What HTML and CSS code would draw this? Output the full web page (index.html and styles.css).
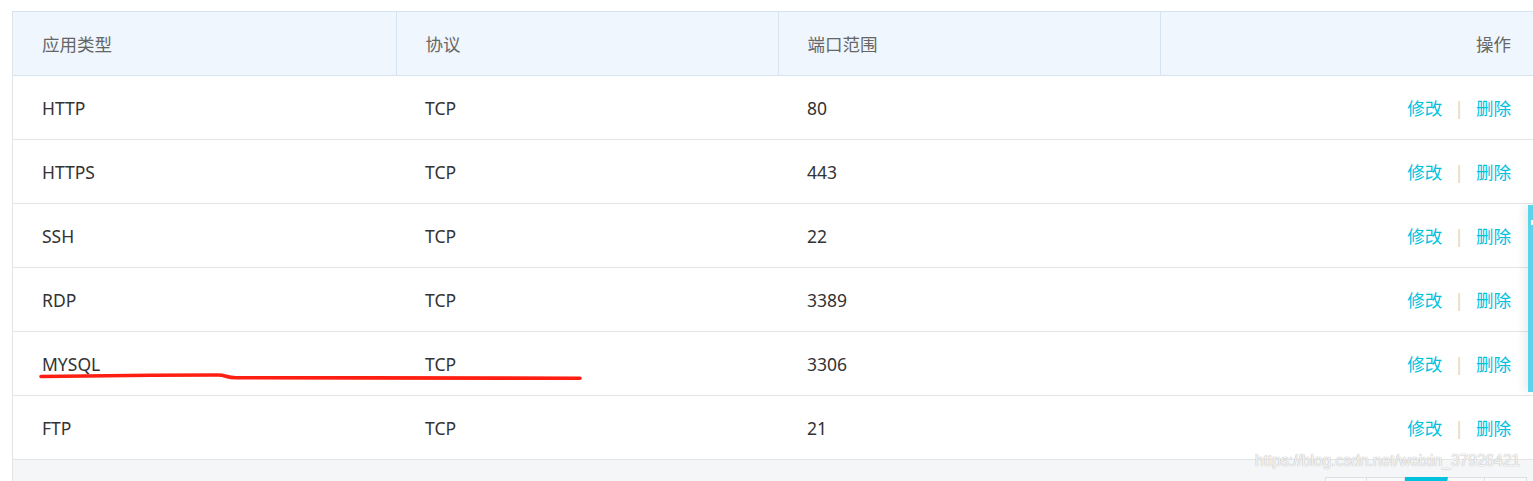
FILE: index.html
```html
<!DOCTYPE html>
<html lang="zh-CN">
<head>
<meta charset="utf-8">
<title>端口规则</title>
<link rel="stylesheet" href="styles.css">
</head>
<body>
<div class="page">
  <div class="panel">
    <table class="rules">
      <colgroup><col class="c1"><col class="c2"><col class="c3"><col class="c4"></colgroup>
      <thead>
        <tr><th>应用类型</th><th>协议</th><th>端口范围</th><th class="ops">操作</th></tr>
      </thead>
      <tbody>
        <tr><td>HTTP</td><td>TCP</td><td>80</td><td class="ops"><a>修改</a><span class="sep">|</span><a>删除</a></td></tr>
        <tr><td>HTTPS</td><td>TCP</td><td>443</td><td class="ops"><a>修改</a><span class="sep">|</span><a>删除</a></td></tr>
        <tr><td>SSH</td><td>TCP</td><td>22</td><td class="ops"><a>修改</a><span class="sep">|</span><a>删除</a></td></tr>
        <tr><td>RDP</td><td>TCP</td><td>3389</td><td class="ops"><a>修改</a><span class="sep">|</span><a>删除</a></td></tr>
        <tr><td>MYSQL</td><td>TCP</td><td>3306</td><td class="ops"><a>修改</a><span class="sep">|</span><a>删除</a></td></tr>
        <tr><td>FTP</td><td>TCP</td><td>21</td><td class="ops"><a>修改</a><span class="sep">|</span><a>删除</a></td></tr>
      </tbody>
    </table>
    <div class="footer">
      <div class="pager">
        <span class="pg w42"></span><span class="pg w38"></span><span class="pg w43 on"></span><span class="pg w37"></span><span class="pg w42"></span>
      </div>
    </div>
  </div>
  <div class="watermark">https://blog.csdn.net/weixin_37926421</div>
  <div class="sidetab"><span class="tick"></span></div>
  <svg class="mark" width="600" height="20" viewBox="0 0 600 20">
    <path d="M41 7.5 C90 6.8 160 6 218 6 C226 6 226 8.8 236 8.8 C350 8.8 470 9 580 9.2" fill="none" stroke="#ff1e12" stroke-width="3.6" stroke-linecap="round"/>
  </svg>
</div>
</body>
</html>
```
FILE: styles.css
```css
html, body {
  margin: 0;
  padding: 0;
  background: #ffffff;
  overflow: hidden;
}
.page {
  position: relative;
  width: 1533px;
  height: 481px;
  padding: 11px 0 0 12px;
  box-sizing: border-box;
  font-family: "Noto Sans", "Noto Sans CJK SC", sans-serif;
  font-size: 17.5px;
  color: #333333;
}
.panel {
  width: 1540px;
  border-left: 1px solid #e2e4e8;
}
.rules {
  width: 1528px;
  border-collapse: collapse;
  table-layout: fixed;
}
.c1 { width: 383px; }
.c2 { width: 382px; }
.c3 { width: 382px; }
.c4 { width: 381px; }
.rules th {
  height: 63px;
  padding: 0 0 0 29px;
  background: #eff6fd;
  border-top: 1px solid #d6e4f2;
  border-bottom: 1px solid #d6e4f2;
  border-left: 1px solid #d6e4f2;
  color: #666666;
  font-weight: normal;
  text-align: left;
}
.rules th:first-child { border-left: none; }
.rules td {
  height: 63px;
  padding: 0 0 0 29px;
  border-bottom: 1px solid #e3e4e6;
  color: #333333;
}
.rules th.ops, .rules td.ops {
  text-align: right;
  padding: 0 30px 0 0;
}
.ops a {
  color: #00c1de;
  cursor: pointer;
}
.ops .sep {
  color: #dcd3c8;
  margin: 0 12px 0 12px;
}
.footer {
  height: 30px;
  background: #f5f6f8;
  position: relative;
}
.pager {
  position: absolute;
  left: 1312px;
  top: 17px;
  display: flex;
}
.pg {
  display: block;
  height: 10px;
  border: 1px solid #dcdfe3;
  border-left: none;
  background: #fafafa;
  box-sizing: border-box;
}
.pg:first-child { border-left: 1px solid #dcdfe3; }
.w42 { width: 42px; }
.w38 { width: 38px; }
.w43 { width: 43px; }
.w37 { width: 37px; }
.pg.on {
  border-top: 4px solid #00c1de;
}
.watermark {
  position: absolute;
  left: 1255px;
  top: 452px;
  font-family: "Liberation Sans", Arial, sans-serif;
  font-size: 15.6px;
  color: #f4f4f4;
  text-shadow: 0 0 1px #b8b8b8, 0 0 1px #c4c4c4;
  white-space: nowrap;
}
.sidetab {
  position: absolute;
  left: 1528px;
  top: 205px;
  width: 10px;
  height: 187px;
  background: #5cd4e9;
  box-shadow: -4px 0 8px rgba(0, 0, 0, 0.08);
}
.tick {
  position: absolute;
  left: 3px;
  top: 15px;
  width: 3px;
  height: 5px;
  background: #ffffff;
}
.mark {
  position: absolute;
  left: 0;
  top: 369px;
}
```
